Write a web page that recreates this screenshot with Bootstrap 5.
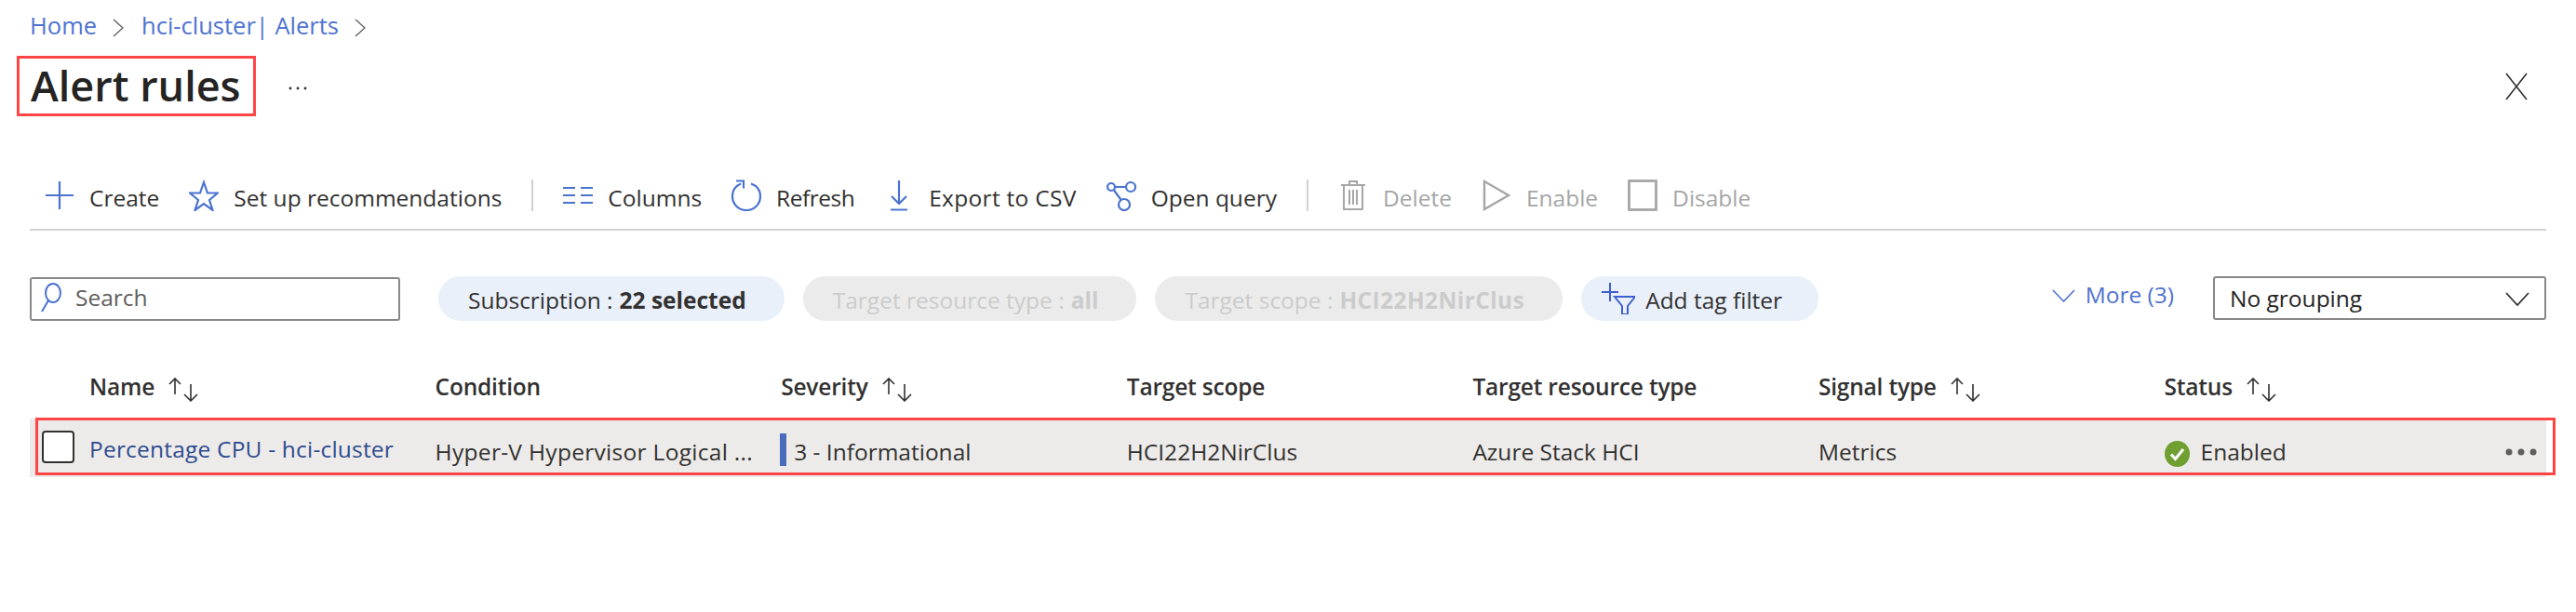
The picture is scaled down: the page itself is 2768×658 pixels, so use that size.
<!DOCTYPE html>
<html lang="en">
<head>
<meta charset="utf-8">
<title>Alert rules</title>
<link href="https://cdn.jsdelivr.net/npm/bootstrap@5.3.0/dist/css/bootstrap.min.css" rel="stylesheet">
<style>
body{font-family:"Open Sans","Noto Sans",sans-serif;font-size:24.5px;color:#323130;background:#fff;overflow:hidden}
.pagewrap{padding:0 32px}
a{text-decoration:none}
.crumbs{--bs-breadcrumb-divider:"";height:60px;padding-top:9px;margin:0;font-size:25.5px;line-height:36px;flex-wrap:nowrap}
.crumbs .breadcrumb-item{padding:0}
.crumbs .breadcrumb-item::before{display:none}
.crumbs a{color:#4f73d1}
.crumbs svg{margin:0 19px 0 17px;vertical-align:-3px}
.titlebox{border:3px solid #ff4646;margin:0 35px 0 -14px;height:65px;width:257px;padding:0 0 0 12px;font-size:45px;font-weight:600;line-height:58px;color:#252423;white-space:nowrap}
.closer{margin-right:20px;padding:0;border:0;background:none;line-height:0}
.actionbar{margin-top:68px;padding:0 0 19px 16px;border-bottom:2px solid #d4d4d4;gap:32px}
.actbtn{display:flex;align-items:center;gap:16px;padding:6px 0 0;border:0;border-radius:0;height:34px;font-size:24.5px;color:#323130;white-space:nowrap;line-height:28px}
.actbtn svg{width:32px;height:34px;flex:none;margin-top:-6px}
.actbtn.off,.actbtn.off:disabled{color:#a6a6a6;opacity:1;border:0}
.squeezed{letter-spacing:-.5px}
.stretched{letter-spacing:.3px}
.vsep{width:2px;height:34px;background:#d0d0d0}
.filterbar{margin-top:48px;height:50px}
.searchbox{width:398px;height:47px;border:2px solid #8a8886;border-radius:3px;padding:0 0 2px 10px;gap:15px;background:#fff}
.searchbox input{border:0;padding:0;font-size:24.5px;color:#323130;box-shadow:none;background:transparent;line-height:30px}
.searchbox input::placeholder{color:#605e5c;opacity:1}
.fpill{height:48px;border-radius:24px;background:#e9f0fa;color:#323130;padding:3px 41px 0 32px;font-size:24.5px;line-height:45px;white-space:nowrap;border:0;display:flex;align-items:center}
.fpill b{font-weight:700;margin-left:7px}
.fpill.dim{background:#ebebeb;color:#cbcbcb}
.fpill .scopeval{letter-spacing:.4px}
.pillgap1{margin-left:41px}
.pillgap2{margin-left:20px}
.fpill.tagpill{padding:3px 39px 0 22px}
.tagpill svg{margin-right:11px;margin-top:-4px;flex:none}
.morelink{color:#4f73d1;font-size:24.5px;margin-left:auto;margin-right:42px;margin-top:-7px;white-space:nowrap;display:flex;align-items:center;gap:11px}
.groupsel{width:358px;height:47px;border:2px solid #8a8886;border-radius:3px;padding:2px 16px 0 16px;font-size:24.5px;margin-top:-2px;color:#252423;background:#fff}
.rulewrap{margin-top:44px}
.ruletable{table-layout:fixed;width:2704px;margin:0;color:#323130;--bs-table-bg:transparent}
.ruletable th{height:60px;padding:0 0 8px 0;font-weight:600;font-size:24.5px;border:0;vertical-align:middle;color:#323130;white-space:nowrap;letter-spacing:-.2px}
.ruletable th svg{margin-left:15px;vertical-align:-7px}
.ruletable td{height:63px;padding:10px 0 0 0;background:#edebe9;border:0;vertical-align:middle;font-size:24.5px;white-space:nowrap;color:#323130}
.ruletable .c0{width:64px}
.ruletable .cw{width:371.6px}
.ruletable td.tickcell{padding:0 0 3px 13px}
.tickbox{display:block;width:35px;height:35px;border:2px solid #323130;border-radius:4px;background:#fff}
.ruletable td.namecell{padding:3px 0 0 0;letter-spacing:.2px}
.namecell a{color:#2f4b8f}
.condcell{letter-spacing:.3px}
.sevbar{display:inline-block;width:7px;height:35px;background:#4a6cbd;margin-right:8px;margin-left:-1px;vertical-align:middle;position:relative;top:-4px}
.statuscell svg{margin-right:12px;vertical-align:-7px}
.morebtn{width:34px;margin-right:10px;margin-top:-10px;line-height:0}
.redmark{position:absolute;left:6px;top:59px;width:2708px;height:62px;border:3px solid #ff4646;pointer-events:none}
</style>
</head>
<body>
<div class="pagewrap">
  <nav aria-label="breadcrumb">
    <ol class="breadcrumb crumbs">
      <li class="breadcrumb-item"><a href="#">Home</a><svg width="12" height="20" viewBox="0 0 12 20"><path d="M1 1l10 9-10 9" fill="none" stroke="#605e5c" stroke-width="1.3"/></svg></li>
      <li class="breadcrumb-item"><a href="#">hci-cluster| Alerts</a><svg width="12" height="20" viewBox="0 0 12 20"><path d="M1 1l10 9-10 9" fill="none" stroke="#605e5c" stroke-width="1.3"/></svg></li>
    </ol>
  </nav>

  <div class="d-flex align-items-center">
    <h1 class="titlebox">Alert rules</h1>
    <svg width="20" height="4" viewBox="0 0 20 4" class="mt-1"><g fill="#323130"><circle cx="2" cy="2" r="1.4"/><circle cx="10" cy="2" r="1.4"/><circle cx="18" cy="2" r="1.4"/></g></svg>
    <button class="closer ms-auto" aria-label="Close"><svg width="24" height="30" viewBox="0 0 24 30"><path d="M1 1l22 28M23 1L1 29" fill="none" stroke="#323130" stroke-width="1.6"/></svg></button>
  </div>

  <div class="d-flex align-items-center actionbar">
    <button class="btn actbtn"><svg viewBox="0 0 32 34"><path d="M1 17h30M16 2v30" stroke="#4a72cf" stroke-width="2.2" fill="none"/></svg>Create</button>
    <button class="btn actbtn"><svg viewBox="0 0 32 34"><path d="M16 3l4 11.500h11l-9 7.500 3.500 11L16 26l-9.500 7L10 22l-9-7.500h11z" fill="none" stroke="#4a72cf" stroke-width="2.200" stroke-linejoin="miter"/></svg>Set up recommendations</button>
    <div class="vsep"></div>
    <button class="btn actbtn"><svg viewBox="0 0 32 34"><path d="M0 9h13M19 9h13M0 17h13M19 17h13M0 25h13M19 25h13" stroke="#4a72cf" stroke-width="2.200" fill="none"/></svg>Columns</button>
    <button class="btn actbtn"><svg viewBox="0 0 32 34"><path d="M21 4.500C28 7 31 12 31 18c0 8.500-6.500 15-15 15S1 26.500 1 18C1 12 4.500 7 10 4.500" fill="none" stroke="#4a72cf" stroke-width="2.200"/><path d="M5 1.500h8v8" fill="none" stroke="#4a72cf" stroke-width="2.200"/></svg><span class="squeezed">Refresh</span></button>
    <button class="btn actbtn"><svg viewBox="0 0 32 34"><path d="M16 1v25M8 18l8 8 8-8M7 32.500h18" fill="none" stroke="#4a72cf" stroke-width="2.200"/></svg><span class="stretched">Export to CSV</span></button>
    <button class="btn actbtn"><svg viewBox="0 0 32 34"><g fill="none" stroke="#4a72cf" stroke-width="2.200"><circle cx="5" cy="8" r="4"/><circle cx="26" cy="8" r="5"/><circle cx="19" cy="27" r="6"/><path d="M9 8h12M8 11.500l8 11"/></g></svg>Open query</button>
    <div class="vsep"></div>
    <button class="btn actbtn off" disabled><svg viewBox="0 0 32 34"><g fill="none" stroke="#a6a6a6" stroke-width="2"><path d="M3 6h26M12 6V2h8v4M6 6v26h20V6M12 11v16M16 11v16M20 11v16"/></g></svg>Delete</button>
    <button class="btn actbtn off" disabled><svg viewBox="0 0 32 34"><path d="M3 2l26 15L3 32z" fill="none" stroke="#a6a6a6" stroke-width="2.400"/></svg>Enable</button>
    <button class="btn actbtn off" disabled><svg viewBox="0 0 32 34"><rect x="1.500" y="1.500" width="29" height="31" fill="none" stroke="#a6a6a6" stroke-width="2.800"/></svg>Disable</button>
  </div>

  <div class="d-flex align-items-center filterbar">
    <div class="d-flex align-items-center searchbox">
      <svg width="22" height="32" viewBox="0 0 22 32" class="flex-shrink-0"><g fill="none" stroke="#4a72cf" stroke-width="2"><ellipse cx="13" cy="11" rx="8" ry="10"/><path d="M8 19L1 31"/></g></svg>
      <input class="form-control" type="text" placeholder="Search" aria-label="Search">
    </div>
    <button class="fpill pillgap1">Subscription :<b>22 selected</b></button>
    <button class="fpill dim pillgap2">Target resource type :<b>all</b></button>
    <button class="fpill dim pillgap2">Target scope :<b class="scopeval">HCI22H2NirClus</b></button>
    <button class="fpill pillgap2 tagpill"><svg width="36" height="34" viewBox="0 0 36 34"><g fill="none" stroke="#3f5fd0" stroke-width="2"><path d="M0 10h18M9 0v20M14 15h22L28 25v9h-6v-9z"/></g></svg>Add tag filter</button>
    <a class="morelink" href="#"><svg width="25" height="14" viewBox="0 0 25 14"><path d="M1 1l11.500 12L24 1" fill="none" stroke="#4f73d1" stroke-width="1.600"/></svg>More (3)</a>
    <div class="d-flex align-items-center justify-content-between groupsel"><span>No grouping</span><svg width="26" height="15" viewBox="0 0 26 15"><path d="M1 1l12 13L25 1" fill="none" stroke="#323130" stroke-width="1.800"/></svg></div>
  </div>

  <div class="position-relative rulewrap">
    <table class="table ruletable">
      <colgroup><col class="c0"><col class="cw"><col class="cw"><col class="cw"><col class="cw"><col class="cw"><col class="cw"><col></colgroup>
      <thead>
        <tr>
          <th></th>
          <th>Name<svg width="34" height="26" viewBox="0 0 34 26"><path d="M7 18V1M1 7l6-6 6 6M24 7v18M17 18l7 7 7-7" fill="none" stroke="#323130" stroke-width="1.600"/></svg></th>
          <th>Condition</th>
          <th>Severity<svg width="34" height="26" viewBox="0 0 34 26"><path d="M7 18V1M1 7l6-6 6 6M24 7v18M17 18l7 7 7-7" fill="none" stroke="#323130" stroke-width="1.600"/></svg></th>
          <th>Target scope</th>
          <th>Target resource type</th>
          <th>Signal type<svg width="34" height="26" viewBox="0 0 34 26"><path d="M7 18V1M1 7l6-6 6 6M24 7v18M17 18l7 7 7-7" fill="none" stroke="#323130" stroke-width="1.600"/></svg></th>
          <th>Status<svg width="34" height="26" viewBox="0 0 34 26"><path d="M7 18V1M1 7l6-6 6 6M24 7v18M17 18l7 7 7-7" fill="none" stroke="#323130" stroke-width="1.600"/></svg></th>
        </tr>
      </thead>
      <tbody>
        <tr>
          <td class="tickcell"><span class="tickbox"></span></td>
          <td class="namecell"><a href="#">Percentage CPU - hci-cluster</a></td>
          <td class="condcell">Hyper-V Hypervisor Logical ...</td>
          <td><span class="sevbar"></span>3 - Informational</td>
          <td>HCI22H2NirClus</td>
          <td>Azure Stack HCI</td>
          <td>Metrics</td>
          <td class="statuscell">
            <div class="d-flex align-items-center justify-content-between">
              <span><svg width="27" height="28" viewBox="0 0 27 28"><ellipse cx="13.500" cy="14" rx="13.500" ry="14" fill="#6f9e31"/><path d="M7 14.500l4.500 5L20 9" fill="none" stroke="#fff" stroke-width="3"/></svg>Enabled</span>
              <span class="morebtn"><svg width="34" height="8" viewBox="0 0 34 8"><g fill="#605e5c"><circle cx="4" cy="4" r="3.500"/><circle cx="17" cy="4" r="3.500"/><circle cx="30" cy="4" r="3.500"/></g></svg></span>
            </div>
          </td>
        </tr>
      </tbody>
    </table>
    <div class="redmark"></div>
  </div>
</div>
<script src="https://cdn.jsdelivr.net/npm/bootstrap@5.3.0/dist/js/bootstrap.bundle.min.js"></script>
</body>
</html>
